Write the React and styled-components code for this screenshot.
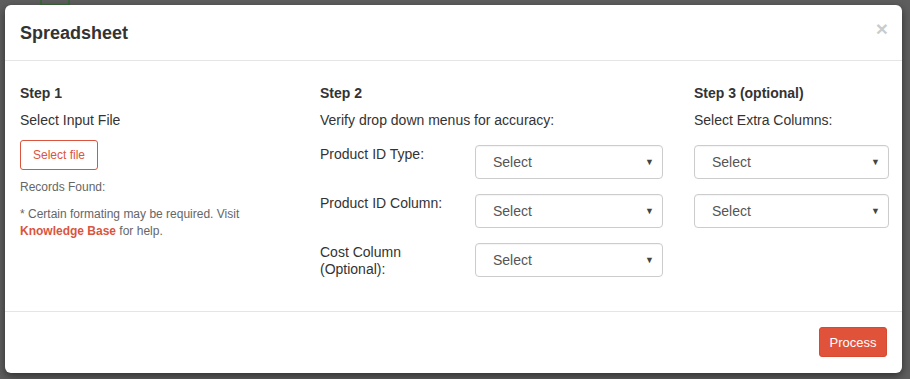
import React from "react";
import styled, { createGlobalStyle } from "styled-components";

const Global = createGlobalStyle`
  html, body { margin: 0; padding: 0; }
  body {
    background: #5e5e5e;
    font-family: "Liberation Sans", Arial, sans-serif;
    color: #333;
    width: 910px;
    height: 379px;
    overflow: hidden;
  }
  * { box-sizing: border-box; }
`;

const Backdrop = styled.div`
  position: relative;
  width: 910px;
  height: 379px;
  padding: 5px 8px 6px 5px;
`;

const BgMark = styled.div`
  position: absolute;
  left: 40px;
  top: -6px;
  width: 30px;
  height: 12px;
  border: 2px solid #2f6b2f;
  border-radius: 2px;
  opacity: 0.7;
`;

const Modal = styled.div`
  position: relative;
  display: flex;
  flex-direction: column;
  height: 368px;
  background: #fff;
  border-radius: 6px;
  box-shadow: 0 3px 9px rgba(0, 0, 0, 0.5);
`;

const Header = styled.div`
  display: flex;
  align-items: center;
  justify-content: space-between;
  height: 56px;
  padding: 0 15px;
  border-bottom: 1px solid #e5e5e5;
`;

const Title = styled.h4`
  margin: 0;
  font-size: 18px;
  font-weight: bold;
  color: #333;
  line-height: 26px;
`;

const Close = styled.span`
  font-size: 21px;
  font-weight: bold;
  color: #000;
  opacity: 0.2;
  line-height: 1;
  margin-top: -8px;
  margin-right: -1px;
`;

const Body = styled.div`
  flex: 1;
  display: grid;
  grid-template-columns: 300px 374px 1fr;
  padding: 22px 0 0 0;
`;

const Col = styled.div`
  padding: 0 15px;
  display: flex;
  flex-direction: column;
  align-items: flex-start;
`;

const StepTitle = styled.div`
  font-size: 14px;
  font-weight: bold;
  line-height: 20px;
  color: #333;
  margin-bottom: 7px;
`;

const Lead = styled.div`
  font-size: 14px;
  line-height: 20px;
  color: #333;
  margin-bottom: 15px;
`;

const OutlineButton = styled.button`
  font-family: inherit;
  font-size: 12px;
  color: #d9553e;
  background: #fff;
  border: 1px solid #d9553e;
  border-radius: 3px;
  height: 30px;
  padding: 0 12px;
  margin-top: -5px;
  margin-bottom: 9px;
`;

const Small = styled.div`
  font-size: 12px;
  line-height: 17px;
  color: #666;
  margin-bottom: ${(p) => p.$mb || 0}px;
`;

const Link = styled.span`
  color: #d9553e;
  font-weight: bold;
`;

const FieldRow = styled.div`
  display: grid;
  grid-template-columns: 155px 1fr;
  width: 100%;
  margin-bottom: 15px;
`;

const SelectStack = styled.div`
  display: flex;
  flex-direction: column;
  gap: 15px;
`;

const Label = styled.div`
  font-size: 14px;
  line-height: 17px;
  color: #333;
  padding-top: 1px;
`;

const SelectBox = styled.div`
  display: flex;
  align-items: center;
  justify-content: space-between;
  width: ${(p) => p.$w}px;
  height: 34px;
  border: 1px solid #ccc;
  border-radius: 4px;
  padding: 0 8px 0 17px;
  font-size: 14px;
  color: #555;
  background: #fff;
  box-shadow: inset 0 1px 1px rgba(0, 0, 0, 0.04);
`;

const Caret = styled.span`
  font-size: 9px;
  color: #444;
`;

const Footer = styled.div`
  display: flex;
  justify-content: flex-end;
  align-items: center;
  height: 62px;
  padding: 0 15px 1px;
  border-top: 1px solid #e5e5e5;
`;

const PrimaryButton = styled.button`
  font-family: "Liberation Sans", Arial, sans-serif;
  font-size: 13px;
  color: #fff;
  background: #e0533a;
  border: 1px solid #d64a31;
  border-radius: 3px;
  height: 30px;
  width: 68px;
  padding: 0;
`;

const Select = ({ w }) => (
  <SelectBox $w={w}>
    <span>Select</span>
    <Caret>▼</Caret>
  </SelectBox>
);

export default function App() {
  return (
    <>
      <Global />
      <Backdrop>
        <BgMark />
        <Modal>
          <Header>
            <Title>Spreadsheet</Title>
            <Close>×</Close>
          </Header>
          <Body>
            <Col>
              <StepTitle>Step 1</StepTitle>
              <Lead>Select Input File</Lead>
              <OutlineButton>Select file</OutlineButton>
              <Small $mb={10}>Records Found:</Small>
              <Small>
                * Certain formating may be required. Visit
                <br />
                <Link>Knowledge Base</Link> for help.
              </Small>
            </Col>
            <Col>
              <StepTitle>Step 2</StepTitle>
              <Lead>Verify drop down menus for accuracy:</Lead>
              <FieldRow>
                <Label>Product ID Type:</Label>
                <Select w={188} />
              </FieldRow>
              <FieldRow>
                <Label>Product ID Column:</Label>
                <Select w={188} />
              </FieldRow>
              <FieldRow>
                <Label>
                  Cost Column
                  <br />
                  (Optional):
                </Label>
                <Select w={188} />
              </FieldRow>
            </Col>
            <Col>
              <StepTitle>Step 3 (optional)</StepTitle>
              <Lead>Select Extra Columns:</Lead>
              <SelectStack>
                <Select w={195} />
                <Select w={195} />
              </SelectStack>
            </Col>
          </Body>
          <Footer>
            <PrimaryButton>Process</PrimaryButton>
          </Footer>
        </Modal>
      </Backdrop>
    </>
  );
}
